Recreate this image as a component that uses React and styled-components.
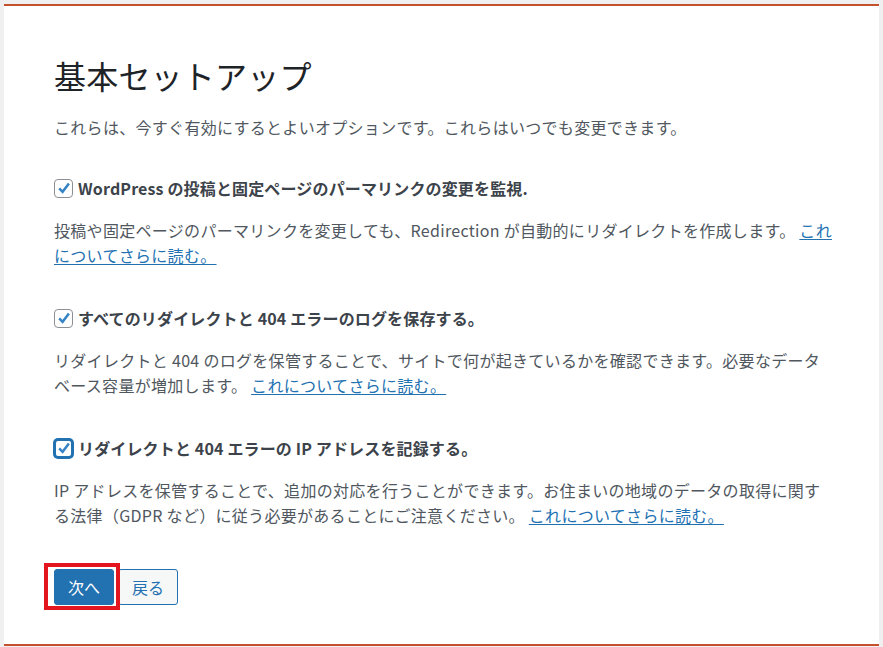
import React from 'react'
import styled, { createGlobalStyle } from 'styled-components'

const GlobalStyle = createGlobalStyle`
    html, body {
        margin: 0;
        padding: 0;
        background: #f0f0f1;
    }
    body {
        padding: 4px 4px 1px 4px;
        font-family: "Noto Sans CJK JP", "Noto Sans", sans-serif;
        -webkit-font-smoothing: antialiased;
    }
`

const StyledPanel = styled.div`
    box-sizing: border-box;
    width: 875px;
    height: 642px;
    background: #fff;
    border-top: 2px solid #c4502d;
    border-bottom: 2px solid #c4502d;
    padding: 49px 45px 0 50px;
    display: flex;
    flex-direction: column;
`

const StyledTitle = styled.h1`
    margin: 0;
    font-size: 32px;
    line-height: 40px;
    font-weight: 400;
    letter-spacing: 0.2px;
    color: #1d2327;
`

const StyledIntro = styled.p`
    margin: 20px 0 0;
    font-size: 16px;
    line-height: 25px;
    letter-spacing: 0.3px;
    color: #50575e;
`

const StyledOption = styled.div`
    display: flex;
    flex-direction: column;
    margin-top: ${(p) => (p.first ? '36px' : '38px')};
`

const StyledLabel = styled.label`
    display: flex;
    align-items: center;
    gap: 5px;
    height: 24px;
    font-size: 16px;
    font-weight: 700;
    letter-spacing: 0.15px;
    color: #3c434a;
`

const StyledBox = styled.span`
    box-sizing: border-box;
    width: 19px;
    height: 19px;
    flex: none;
    display: flex;
    align-items: center;
    justify-content: center;
    background: #fff;
    border-radius: 4px;
    border: ${(p) => (p.focused ? '2px solid #2271b1' : '1px solid #8c8f94')};
    box-shadow: ${(p) => (p.focused ? '0 0 0 1px #2271b1' : 'none')};
`

const StyledDesc = styled.p`
    margin: 18px 0 0;
    font-size: 16px;
    line-height: 25px;
    letter-spacing: 0.3px;
    color: #50575e;
`

const StyledLink = styled.a`
    color: #2271b1;
    text-decoration: underline;
    text-underline-offset: 2px;
`

const StyledActions = styled.div`
    display: flex;
    gap: 4px;
    margin-top: 41px;
`

const StyledButtonWrap = styled.span`
    position: relative;
    display: inline-flex;
`

const StyledButton = styled.button`
    box-sizing: border-box;
    height: 36px;
    padding: 0 13px;
    border-radius: 3px;
    font-family: inherit;
    font-size: 16px;
    line-height: 34px;
    border: 1px solid #2271b1;
    background: ${(p) => (p.primary ? '#2271b1' : '#f6f7f7')};
    color: ${(p) => (p.primary ? '#fff' : '#2271b1')};
    cursor: pointer;
`

const StyledHighlight = styled.span`
    position: absolute;
    left: -10px;
    top: -6px;
    width: 76px;
    height: 47px;
    box-sizing: border-box;
    border: 4px solid #e3151f;
    pointer-events: none;
`

const Check = () => (
    <svg width="14" height="14" viewBox="0 0 14 14">
        <path
            d="M2.2 7.4 L5.6 10.8 L11.9 2.6"
            fill="none"
            stroke="#3582c4"
            strokeWidth="2.5"
            strokeLinejoin="miter"
        />
    </svg>
)

const OPTIONS = [
    {
        label: 'WordPress の投稿と固定ページのパーマリンクの変更を監視.',
        desc: '投稿や固定ページのパーマリンクを変更しても、Redirection が自動的にリダイレクトを作成します。',
    },
    {
        label: 'すべてのリダイレクトと 404 エラーのログを保存する。',
        desc: 'リダイレクトと 404 のログを保管することで、サイトで何が起きているかを確認できます。必要なデータベース容量が増加します。',
    },
    {
        label: 'リダイレクトと 404 エラーの IP アドレスを記録する。',
        desc: 'IP アドレスを保管することで、追加の対応を行うことができます。お住まいの地域のデータの取得に関する法律（GDPR など）に従う必要があることにご注意ください。',
        focused: true,
    },
]

export default function App() {
    return (
        <>
            <GlobalStyle />
            <StyledPanel>
                <StyledTitle>基本セットアップ</StyledTitle>
                <StyledIntro>
                    これらは、今すぐ有効にするとよいオプションです。これらはいつでも変更できます。
                </StyledIntro>

                {OPTIONS.map((option, i) => (
                    <StyledOption key={i} first={i === 0}>
                        <StyledLabel>
                            <StyledBox focused={option.focused}>
                                <Check />
                            </StyledBox>
                            {option.label}
                        </StyledLabel>
                        <StyledDesc>
                            {option.desc}{' '}
                            <StyledLink href="#">これについてさらに読む。</StyledLink>
                        </StyledDesc>
                    </StyledOption>
                ))}

                <StyledActions>
                    <StyledButtonWrap>
                        <StyledButton primary>次へ</StyledButton>
                        <StyledHighlight />
                    </StyledButtonWrap>
                    <StyledButton>戻る</StyledButton>
                </StyledActions>
            </StyledPanel>
        </>
    )
}
